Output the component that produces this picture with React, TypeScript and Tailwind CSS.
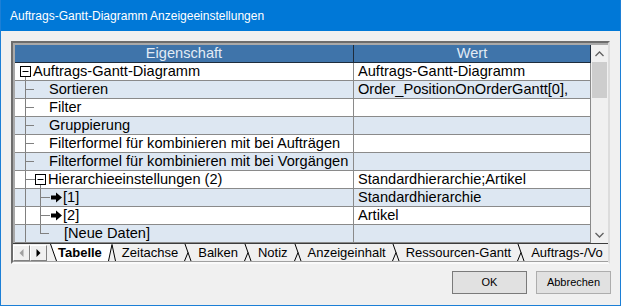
import React from 'react';

type Kind = 'root' | 'child' | 'group' | 'item' | 'last';

type Row = {
  name: string;
  value?: string;
  kind: Kind;
};

const rows: Row[] = [
  { name: 'Auftrags-Gantt-Diagramm', value: 'Auftrags-Gantt-Diagramm', kind: 'root' },
  { name: 'Sortieren', value: 'Order_PositionOnOrderGantt[0],', kind: 'child' },
  { name: 'Filter', kind: 'child' },
  { name: 'Gruppierung', kind: 'child' },
  { name: 'Filterformel für kombinieren mit bei Aufträgen', kind: 'child' },
  { name: 'Filterformel für kombinieren mit bei Vorgängen', kind: 'child' },
  { name: 'Hierarchieeinstellungen (2)', value: 'Standardhierarchie;Artikel', kind: 'group' },
  { name: '[1]', value: 'Standardhierarchie', kind: 'item' },
  { name: '[2]', value: 'Artikel', kind: 'item' },
  { name: '[Neue Daten]', kind: 'last' },
];

const tabs = ['Zeitachse', 'Balken', 'Notiz', 'Anzeigeinhalt', 'Ressourcen-Gantt', 'Auftrags-/Vo'];

const LINE = '#808080';

function TreeLines({ kind }: { kind: Kind }) {
  if (kind === 'root') {
    return (
      <svg width="18" height="17" className="block shrink-0">
        <line x1="10.5" y1="14" x2="10.5" y2="17" stroke={LINE} />
        <rect x="5.5" y="3.5" width="10" height="10" fill="#fff" stroke="#000" />
        <line x1="7.5" y1="8.5" x2="13.5" y2="8.5" stroke="#000" />
      </svg>
    );
  }
  if (kind === 'child') {
    return (
      <svg width="34" height="17" className="block shrink-0">
        <line x1="10.5" y1="0" x2="10.5" y2="17" stroke={LINE} />
        <line x1="11" y1="8.5" x2="19" y2="8.5" stroke={LINE} />
      </svg>
    );
  }
  if (kind === 'group') {
    return (
      <svg width="33" height="17" className="block shrink-0">
        <line x1="10.5" y1="0" x2="10.5" y2="17" stroke={LINE} />
        <line x1="11" y1="8.5" x2="20" y2="8.5" stroke={LINE} />
        <line x1="25.5" y1="14" x2="25.5" y2="17" stroke={LINE} />
        <rect x="20.5" y="3.5" width="10" height="10" fill="#fff" stroke="#000" />
        <line x1="22.5" y1="8.5" x2="28.5" y2="8.5" stroke="#000" />
      </svg>
    );
  }
  if (kind === 'item') {
    return (
      <svg width="48" height="17" className="block shrink-0">
        <line x1="10.5" y1="0" x2="10.5" y2="17" stroke={LINE} />
        <line x1="25.5" y1="0" x2="25.5" y2="17" stroke={LINE} />
        <line x1="26" y1="8.5" x2="35" y2="8.5" stroke={LINE} />
        <rect x="36" y="6.5" width="6" height="4" fill="#000" />
        <polygon points="41,3.5 47,8.5 41,13.5" fill="#000" />
      </svg>
    );
  }
  return (
    <svg width="49" height="17" className="block shrink-0">
      <line x1="10.5" y1="0" x2="10.5" y2="17" stroke={LINE} />
      <line x1="25.5" y1="0" x2="25.5" y2="8.5" stroke={LINE} />
      <line x1="25" y1="8.5" x2="34" y2="8.5" stroke={LINE} />
    </svg>
  );
}

function Chevron({ down }: { down?: boolean }) {
  return (
    <svg width="9" height="6" className="block">
      <polyline
        points={down ? '0.5,1 4.5,5 8.5,1' : '0.5,5 4.5,1 8.5,5'}
        fill="none"
        stroke="#606060"
        strokeWidth="1.3"
      />
    </svg>
  );
}

function TabStart() {
  return (
    <svg width="8" height="17" className="block shrink-0">
      <polygon points="0,0 8,0 8,17 6.5,17" fill="#fff" />
      <line x1="0.5" y1="0" x2="6.5" y2="17" stroke="#000" />
    </svg>
  );
}

function TabPeak() {
  return (
    <svg width="8" height="17" className="block shrink-0">
      <polygon points="0,0 4,0 0.5,17 0,17" fill="#fff" />
      <polyline points="0.5,17 4,0.5 7.5,17" fill="none" stroke="#000" />
    </svg>
  );
}

function TabJoin() {
  return (
    <svg width="8" height="17" className="block shrink-0">
      <line x1="1" y1="0" x2="7" y2="17" stroke="#000" />
      <line x1="0.5" y1="17" x2="4" y2="8.5" stroke="#000" />
    </svg>
  );
}

function NavButton({ dir }: { dir: 'left' | 'right' }) {
  return (
    <div className="w-[17px] h-[16px] mt-[1px] shrink-0 flex items-center justify-center bg-[#f0f0f0] border border-t-white border-l-white border-b-[#808080] border-r-[#808080]">
      <svg width="5" height="8" className="block">
        {dir === 'left' ? (
          <polygon points="4.5,0 0.5,4 4.5,8" fill="#a0a0a0" />
        ) : (
          <polygon points="0.5,0 4.5,4 0.5,8" fill="#000" />
        )}
      </svg>
    </div>
  );
}

export default function App() {
  return (
    <div className="w-[621px] h-[306px] flex flex-col bg-[#f0f0f0] border-x border-b border-[#1c7fd6] font-['Liberation_Sans',Arial,sans-serif] overflow-hidden">
      <div className="h-[31px] shrink-0 flex items-center pl-[9px] bg-[#0078d7] text-white text-[12px]">
        Auftrags-Gantt-Diagramm Anzeigeeinstellungen
      </div>

      <div className="pl-[10px] pt-[10px]">
        <div className="w-[599px] border-t-2 border-l-2 border-t-[#6d6d6d] border-l-[#6d6d6d] border-r-2 border-r-[#dcdcdc] border-b-2 border-b-[#fafafa]">
          <div className="flex border-t-2 border-l-2 border-[#a9a9a9]">
            <div className="w-[576px] text-[14.6px] leading-[17px] text-black">
              <div className="h-[18px] flex bg-[#3f74aa] border-b border-[#1e2c3c] text-[#e2ebf5]">
                <div className="w-[339px] border-r border-[#1e2c3c] text-center">Eigenschaft</div>
                <div className="w-[237px] border-r border-[#1e2c3c] text-center">Wert</div>
              </div>
              {rows.map((row, i) => (
                <div
                  key={i}
                  className={
                    'h-[18px] flex border-b border-[#8a8a8a] ' + (i % 2 === 1 ? 'bg-[#dde7f2]' : 'bg-white')
                  }
                >
                  <div className="w-[339px] flex items-center border-r border-[#8a8a8a] whitespace-nowrap overflow-hidden">
                    <TreeLines kind={row.kind} />
                    <span>{row.name}</span>
                  </div>
                  <div className="w-[237px] pl-[4px] border-r border-[#8a8a8a] whitespace-nowrap overflow-hidden">
                    {row.value}
                  </div>
                </div>
              ))}
            </div>

            <div className="w-[17px] flex flex-col bg-[#f0f0f0]">
              <div className="h-[17px] flex items-center justify-center">
                <Chevron />
              </div>
              <div className="h-[36px] mx-[1px] bg-[#cdcdcd]" />
              <div className="flex-1" />
              <div className="h-[17px] flex items-center justify-center">
                <Chevron down />
              </div>
            </div>
          </div>

          <div className="h-[19px] flex border-t border-[#3c3c3c] border-b border-b-[#a0a0a0] overflow-hidden whitespace-nowrap text-[13px] leading-[17px] text-black">
            <NavButton dir="left" />
            <NavButton dir="right" />
            <div className="ml-[3px] flex shrink-0">
              <TabStart />
              <span className="bg-white pr-[6px] font-bold">Tabelle</span>
              <TabPeak />
              {tabs.map((t, i) => (
                <React.Fragment key={t}>
                  {i > 0 && <TabJoin />}
                  <span className="px-[6px]">{t}</span>
                </React.Fragment>
              ))}
            </div>
          </div>
        </div>
      </div>

      <div className="mt-[7px] pr-[9px] flex justify-end gap-[9px] text-[11px] text-black">
        <button className="w-[75px] h-[23px] bg-[#e1e1e1] border border-[#7a7a7a]">OK</button>
        <button className="w-[75px] h-[23px] bg-[#e1e1e1] border border-[#adadad]">Abbrechen</button>
      </div>
    </div>
  );
}
